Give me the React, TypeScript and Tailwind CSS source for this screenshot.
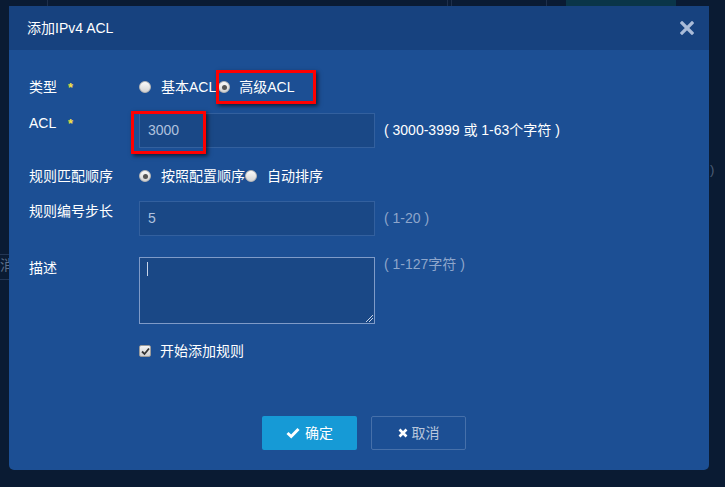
import React from "react";

const font = { fontFamily: '"Liberation Sans", "Noto Sans CJK SC", Arial, sans-serif' };

function Radio({ checked }: { checked?: boolean }) {
  return (
    <span className="relative inline-flex h-[12px] w-[12px] shrink-0 items-center justify-center rounded-full border border-[#b8b8b8] bg-gradient-to-b from-[#fafafa] to-[#d4d4d4]">
      {checked && <span className="h-[5px] w-[5px] rounded-full bg-[#555]" />}
    </span>
  );
}

function Label({ text, star }: { text: string; star?: boolean }) {
  return (
    <div className="flex w-[110px] shrink-0 items-center text-[14px] text-white">
      <span className={star ? "w-[39px]" : ""}>{text}</span>
      {star && <span className="text-[13px] font-bold leading-none text-[#f5e342]">*</span>}
    </div>
  );
}

export default function App() {
  return (
    <div className="relative h-[487px] w-[725px] overflow-hidden bg-[#0a1b33]" style={font}>
      {/* background page fragments */}
      <div className="absolute left-[47px] top-0 h-[6px] w-px bg-[#1e2f4a]" />
      <div className="absolute left-[447px] top-0 h-[6px] w-px bg-[#1e2f4a]" />
      <div className="absolute left-[451px] top-0 h-[6px] w-px bg-[#1e2f4a]" />
      <div className="absolute left-[546px] top-0 h-[6px] w-px bg-[#1e2f4a]" />
      <div className="absolute left-[566px] top-0 h-[6px] w-[110px] bg-[#0a3548]" />
      <div className="absolute left-0 top-[254px] h-px w-[9px] bg-[#233654]" />
      <div className="absolute left-0 top-[279px] h-px w-[9px] bg-[#233654]" />
      <div className="absolute left-[0px] top-[255px] text-[14px] text-[#5d6e88]">消</div>
      <div className="absolute left-[710px] top-[160px] text-[13px] text-[#4d5e78]">)</div>

      <div className="relative ml-[9px] mt-[6px] flex h-[464px] w-[700px] flex-col overflow-hidden rounded-b-[5px] bg-[#1c4f94]">
        {/* header */}
        <div className="flex h-[44px] shrink-0 items-center justify-between bg-[#17427f] pl-[18px] pr-[15px]">
          <span className="text-[14px] text-white">添加IPv4 ACL</span>
          <svg width="14" height="14" viewBox="0 0 14 14" className="text-[#a9bbd8]">
            <path d="M2 2 L12 12 M12 2 L2 12" stroke="currentColor" strokeWidth="3.2" strokeLinecap="square" />
          </svg>
        </div>

        {/* body */}
        <div className="flex flex-col pl-[20px] pt-[27px] text-[14px]">
          {/* type */}
          <div className="flex h-[20px] items-center">
            <Label text="类型" star />
            <div className="flex items-center text-white">
              <Radio />
              <span className="ml-[10px] mr-[2px]">基本ACL</span>
              <Radio checked />
              <span className="ml-[9px]">高级ACL</span>
            </div>
          </div>

          {/* ACL */}
          <div className="mt-[16px] flex items-start">
            <Label text="ACL" star />
            <div className="flex h-[35px] w-[236px] items-center border border-[#33609e] bg-[#1a4886] px-[8px] text-[#b0c2de]">
              3000
            </div>
            <span className="ml-[9px] self-center whitespace-pre text-white">( 3000-3999 或 1-63个字符 )</span>
          </div>

          {/* order */}
          <div className="mt-[18px] flex h-[20px] items-center">
            <Label text="规则匹配顺序" />
            <div className="flex items-center text-white">
              <Radio checked />
              <span className="ml-[10px]">按照配置顺序</span>
              <Radio />
              <span className="ml-[10px]">自动排序</span>
            </div>
          </div>

          {/* step */}
          <div className="mt-[15px] flex items-start">
            <Label text="规则编号步长" />
            <div className="flex h-[35px] w-[236px] items-center border border-[#33609e] bg-[#1a4886] px-[8px] text-[#b0c2de]">
              5
            </div>
            <span className="ml-[9px] self-center text-[#8ea6cb]">( 1-20 )</span>
          </div>

          {/* description */}
          <div className="mt-[21px] flex items-start">
            <div className="pt-[1px]">
              <Label text="描述" />
            </div>
            <div className="relative h-[67px] w-[236px] border border-[#7f9bc8] bg-[#1a4886]">
              <div className="absolute left-[7px] top-[4px] h-[14px] w-px bg-[#c8d4e8]" />
              <svg className="absolute bottom-[1px] right-[1px]" width="7" height="7" viewBox="0 0 7 7">
                <path d="M7 0 L0 7 M7 3 L3 7" stroke="#c8d4e8" strokeWidth="1" />
              </svg>
            </div>
            <span className="ml-[9px] mt-[-3px] text-[#8ea6cb]">( 1-127字符 )</span>
          </div>

          {/* checkbox */}
          <div className="mt-[17px] flex h-[20px] items-center pl-[110px]">
            <span className="flex h-[12px] w-[12px] items-center justify-center rounded-[2px] border border-[#9a9a9a] bg-gradient-to-b from-[#f4f4f4] to-[#d0d0d0]">
              <svg width="9" height="9" viewBox="0 0 9 9">
                <path d="M1 4.5 L3.5 7 L8 1.5" stroke="#333" strokeWidth="1.8" fill="none" />
              </svg>
            </span>
            <span className="ml-[9px] text-white">开始添加规则</span>
          </div>

          {/* buttons */}
          <div className="mt-[55px] flex pl-[233px]">
            <button className="flex h-[34px] w-[95px] items-center justify-center gap-[5px] rounded-[2px] bg-[#169ad6] text-[14px] text-white">
              <svg width="14" height="12" viewBox="0 0 14 12">
                <path d="M1.5 6 L5.2 9.5 L12.5 2" stroke="white" strokeWidth="3" fill="none" />
              </svg>
              确定
            </button>
            <button className="ml-[14px] flex h-[34px] w-[95px] items-center justify-center gap-[4px] rounded-[2px] border border-[#4670aa] text-[14px] text-[#b9c7dd]">
              <svg width="10" height="10" viewBox="0 0 10 10">
                <path d="M1.5 1.5 L8.5 8.5 M8.5 1.5 L1.5 8.5" stroke="white" strokeWidth="2.6" />
              </svg>
              取消
            </button>
          </div>
        </div>
      </div>

      {/* red annotation boxes */}
      <div className="absolute left-[216px] top-[70px] h-[34px] w-[100px] border-[3px] border-[#ff0000] shadow-[2px_2px_4px_rgba(0,0,0,0.6)]" />
      <div className="absolute left-[131px] top-[111px] h-[43px] w-[75px] border-[3px] border-[#ff0000] shadow-[2px_2px_4px_rgba(0,0,0,0.6)]" />
    </div>
  );
}
